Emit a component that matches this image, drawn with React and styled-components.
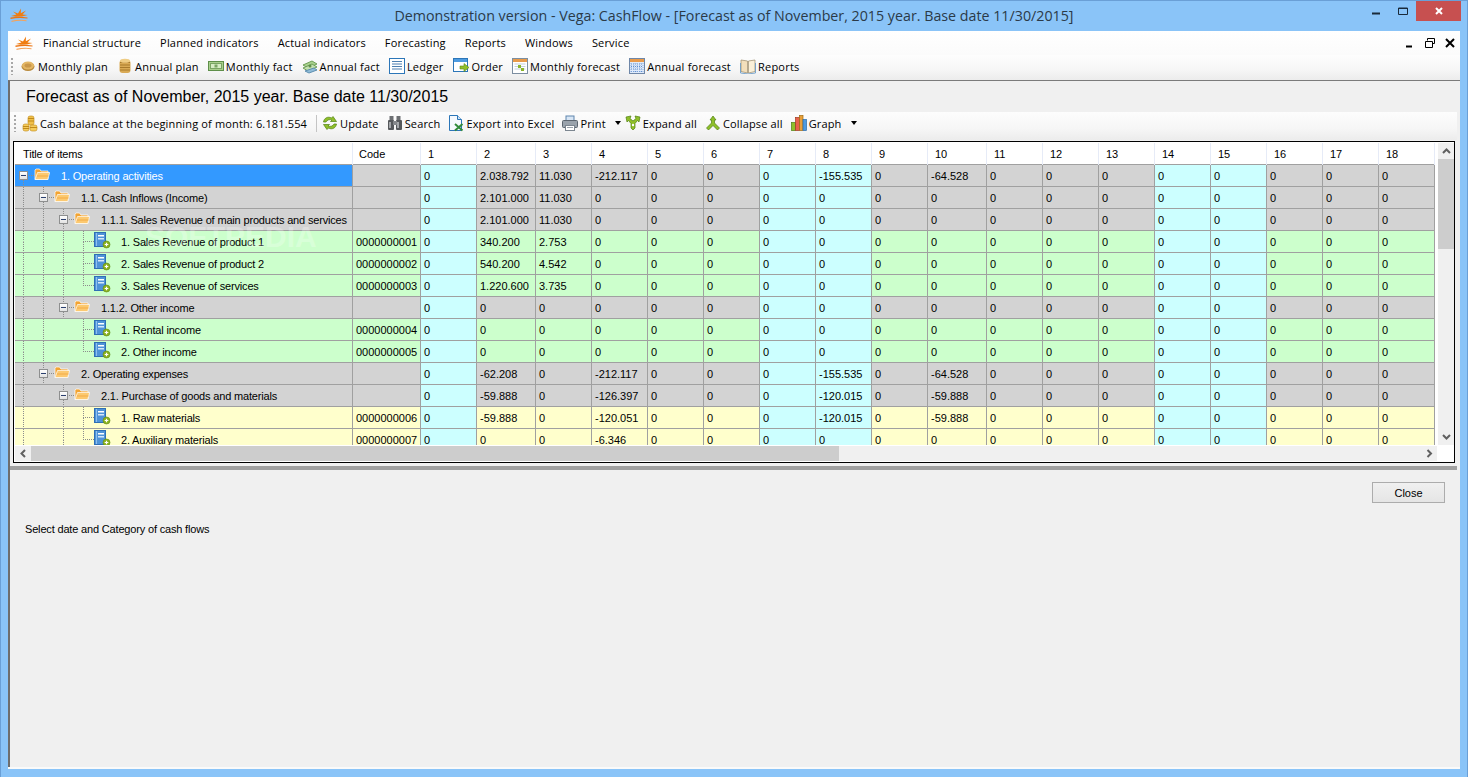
import React from "react";
import styled, { createGlobalStyle, css } from "styled-components";

const GlobalStyle = createGlobalStyle`
  html, body {
    margin: 0;
    padding: 0;
    background: #8ac4f8;
  }
  * {
    box-sizing: border-box;
  }
`;

const uiFont = `"Open Sans", "Noto Sans", sans-serif`;
const gridFont = `"Liberation Sans", Arial, sans-serif`;

const Window = styled.div`
  width: 1468px;
  height: 777px;
  display: flex;
  flex-direction: column;
  overflow: hidden;
  background: #8ac4f8;
  border: 1px solid #6a9fd6;
  border-bottom: 0;
`;

const TitleBar = styled.div`
  height: 30px;
  flex-shrink: 0;
  display: grid;
  grid-template-columns: 1fr auto 1fr;
  align-items: start;
`;

const AppMark = styled.div`
  padding: 7px 0 0 9px;
  line-height: 0;
`;

const WindowTitle = styled.div`
  font-family: ${uiFont};
  font-size: 14.25px;
  line-height: 30px;
  color: #2b3a48;
`;

const Controls = styled.div`
  display: flex;
  justify-content: flex-end;
  padding-right: 6px;
`;

const WinButton = styled.div`
  width: ${({ $w }) => $w}px;
  height: 20px;
  display: flex;
  align-items: center;
  justify-content: center;
  background: ${({ $close }) => ($close ? "#c75050" : "transparent")};
`;

const Client = styled.div`
  flex: 1;
  min-height: 0;
  margin: 0 7px 8px;
  display: flex;
  flex-direction: column;
  background: #f0f0f0;
  border-bottom: 2px solid #fafafa;
`;

const MenuBar = styled.div`
  height: 24px;
  flex-shrink: 0;
  display: flex;
  align-items: center;
  padding-left: 7px;
  background: linear-gradient(#ffffff, #fbfbfb);
`;

const MenuMark = styled.div`
  width: 28px;
  line-height: 0;
`;

const MenuItems = styled.div`
  display: flex;
  gap: 19px;
  flex: 1;
  padding-bottom: 2px;
`;

const MenuItem = styled.span`
  font-family: ${uiFont};
  font-size: 11px;
  letter-spacing: 0.17px;
  color: #000;
  white-space: nowrap;
`;

const MdiButtons = styled.div`
  display: flex;
  align-items: center;
  gap: 8px;
  padding-right: 4px;
`;

const ToolBar = styled.div`
  height: ${({ $h }) => $h}px;
  flex-shrink: 0;
  display: flex;
  align-items: center;
  gap: ${({ $gap }) => $gap}px;
  padding: 0 0 ${({ $lift }) => $lift}px ${({ $pad }) => $pad}px;
  background: linear-gradient(#fdfdfd, #f6f6f6 60%, #ececec);
`;

const Grip = styled.div`
  width: 2px;
  height: 17px;
  margin-right: -2px;
  background: repeating-linear-gradient(to bottom, #a8a8a8 0 2px, transparent 2px 4px);
`;

const ToolItem = styled.div`
  display: flex;
  align-items: center;
  gap: 2px;
  font-family: ${uiFont};
  font-size: 11px;
  letter-spacing: ${({ $track }) => $track}px;
  color: #000;
  white-space: nowrap;
`;

const ToolSep = styled.div`
  width: 1px;
  height: 17px;
  margin: 0 -3px 0 1px;
  background: #c4c4c4;
`;

const DropArrow = styled.div`
  width: 0;
  height: 0;
  margin-left: 1px;
  margin-right: -4px;
  border-left: 3.5px solid transparent;
  border-right: 3.5px solid transparent;
  border-top: 4px solid #000;
`;

const Child = styled.div`
  flex: 1;
  min-height: 0;
  display: flex;
  flex-direction: column;
  border-top: 1px solid #7b7b7b;
  border-left: 2px solid #6e6e6e;
  padding-right: 3px;
  background: #f0f0f0;
`;

const ChildTitle = styled.div`
  height: 31px;
  flex-shrink: 0;
  padding-left: 16px;
  font-family: ${gridFont};
  font-size: 16px;
  line-height: 31px;
  color: #000;
`;

const GridBox = styled.div`
  height: 322px;
  flex-shrink: 0;
  margin: 1px 2px 0 3px;
  display: flex;
  flex-direction: column;
  border: 1px solid #000;
  padding: 1px 0 1px 1px;
  background: #fff;
`;

const GridTop = styled.div`
  height: 302px;
  flex-shrink: 0;
  display: flex;
`;

const GridPane = styled.div`
  position: relative;
  flex: 1;
  min-width: 0;
  overflow: hidden;
  background: #fff;
`;

const Watermark = styled.div`
  position: absolute;
  left: 130px;
  top: 77px;
  font-family: ${gridFont};
  font-size: 30px;
  font-weight: bold;
  color: rgba(255, 255, 255, 0.26);
  pointer-events: none;
`;

const columns = `338px 68px 56px 59px repeat(7, 56px) 59px repeat(8, 56px)`;

const HeaderRow = styled.div`
  display: grid;
  grid-template-columns: ${columns};
  height: 22px;
  width: 1420px;
  border-bottom: 1px solid #a0a0a0;
`;

const HeaderCell = styled.div`
  font-family: ${gridFont};
  font-size: 11px;
  letter-spacing: ${({ $tight }) => ($tight ? "-0.17px" : "0")};
  line-height: 23px;
  padding-left: ${({ $pad }) => $pad}px;
  border-right: 1px solid #e6ebf7;
  color: #000;
`;

const rowColors = { group: "#d3d3d3", income: "#ccffcc", expense: "#ffffcc" };

const Row = styled.div`
  display: grid;
  grid-template-columns: ${columns};
  height: 22px;
  width: 1420px;
  border-bottom: 1px solid #a0a0a0;
  background: ${({ $kind }) => rowColors[$kind]};
`;

const TreeCell = styled.div`
  display: flex;
  align-items: stretch;
  height: 21px;
  border-right: 1px solid #a0a0a0;
  background: ${({ $active }) => ($active ? "#3399ff" : "transparent")};
  color: ${({ $active }) => ($active ? "#fff" : "#000")};
`;

const dotsV = `repeating-linear-gradient(to bottom, #8c8c8c 0 1px, transparent 1px 2px)`;
const dotsH = `repeating-linear-gradient(to right, #8c8c8c 0 1px, transparent 1px 2px)`;

const Slot = styled.div`
  width: ${({ $w }) => $w || 20}px;
  flex-shrink: 0;
  display: flex;
  align-items: center;
  background-repeat: no-repeat;
  ${({ $up, $down, $h }) => {
    const layers = [];
    if ($up) layers.push(`${dotsV} 8px 0 / 1px 50% no-repeat`);
    if ($down) layers.push(`${dotsV} 8px 100% / 1px 50% no-repeat`);
    if ($h) layers.push(`${dotsH} 8px 50% / 100% 1px no-repeat`);
    return layers.length ? css`background: ${layers.join(", ")};` : "";
  }}
`;

const Toggler = styled.div`
  width: 9px;
  height: 9px;
  margin-left: 4px;
  display: flex;
  align-items: center;
  justify-content: center;
  border: 1px solid #8e8f8f;
  background: linear-gradient(#ffffff, #e2e2e2);
  &::after {
    content: "";
    width: 5px;
    height: 1px;
    background: #2a3f6e;
  }
`;

const NodeIcon = styled.div`
  width: 16px;
  height: 16px;
  flex-shrink: 0;
  align-self: center;
  margin-top: -3px;
  line-height: 0;
`;

const NodeLabel = styled.div`
  padding-left: 11px;
  font-family: ${gridFont};
  font-size: 11px;
  letter-spacing: -0.17px;
  line-height: 23px;
  white-space: nowrap;
`;

const Cell = styled.div`
  height: 21px;
  padding-left: ${({ $pad }) => $pad || 3}px;
  font-family: ${gridFont};
  font-size: 11px;
  line-height: 23px;
  color: #000;
  border-right: 1px solid #a0a0a0;
  white-space: nowrap;
  overflow: hidden;
  ${({ $weekend }) => $weekend && "background: #ccffff;"}
`;

const VBar = styled.div`
  width: 16px;
  flex-shrink: 0;
  display: flex;
  flex-direction: column;
  background: #f0f0f0;
`;

const ArrowBox = styled.div`
  width: 16px;
  height: 16px;
  flex-shrink: 0;
  display: flex;
  align-items: center;
  justify-content: center;
  line-height: 0;
`;

const VThumb = styled.div`
  height: ${({ $size }) => $size}px;
  flex-shrink: 0;
  background: #cdcdcd;
`;

const Spring = styled.div`
  flex: 1;
`;

const HBar = styled.div`
  height: 15px;
  flex-shrink: 0;
  margin-top: 1px;
  margin-right: 17px;
  display: flex;
  align-items: center;
  background: #f0f0f0;
`;

const HThumb = styled.div`
  width: ${({ $size }) => $size}px;
  height: 15px;
  flex-shrink: 0;
  background: #cdcdcd;
`;

const Splitter = styled.div`
  height: 4px;
  flex-shrink: 0;
  margin-top: 3px;
  background: #a0a0a0;
`;

const BottomPane = styled.div`
  flex: 1;
  display: flex;
  flex-direction: column;
  padding: 12px 12px 0 15px;
`;

const CloseButton = styled.button`
  align-self: flex-end;
  width: 73px;
  height: 21px;
  padding: 0;
  font-family: ${gridFont};
  font-size: 11px;
  color: #000;
  border: 1px solid #acacac;
  background: linear-gradient(#f0f0f0, #e5e5e5);
`;

const StatusText = styled.div`
  margin-top: 20px;
  font-family: ${gridFont};
  font-size: 11px;
  letter-spacing: -0.17px;
  line-height: 13px;
  color: #000;
`;

// --- drawings ---

const Sun = () => (
  <svg width="18" height="14" viewBox="0 0 18 14">
    <path d="M1 8 L6.500 6.400 L3 3.500 L8 5.600 L11 0.500 L10.800 5.200 L16 2.500 L12.500 6.400 L17.500 7 L12 8.400 L6 8.800 Z" fill="#f07c10" />
    <path d="M0.500 9.500 Q9 7.800 17.500 9.500 L17.500 10.600 Q9 9.200 0.500 11 Z" fill="#ec7412" />
    <path d="M1.500 12.800 Q9 11 16.500 12.300 L16.500 13.200 Q9 12.200 1.500 14 Z" fill="#f4a25a" />
  </svg>
);

const Folder = () => (
  <svg width="16" height="16" viewBox="0 0 16 16">
    <path d="M1 4 L1 13.500 L14 13.500 L14 5 L7 5 L5.500 3 L2 3 Z" fill="#f2a433" stroke="#fff" strokeWidth=".7" />
    <path d="M1 13.500 L3.500 6.500 L15.700 6.500 L13.700 13.500 Z" fill="#fcc970" stroke="#fff" strokeWidth=".7" />
    <path d="M3 10 L14.500 10" stroke="#f3ab45" />
  </svg>
);

const Book = () => (
  <svg width="17" height="17" viewBox="0 0 17 17">
    <rect x="0.500" y="0.500" width="11" height="14" fill="#4f93d8" stroke="#2f6fb5" />
    <rect x="2" y="1" width="1" height="13" fill="#8fc0ee" />
    <rect x="4" y="3" width="6" height="1.500" fill="#fff" />
    <rect x="4" y="6" width="6" height="1.500" fill="#d5e8fa" />
    <circle cx="12.500" cy="12.500" r="3.500" fill="#8cb21e" stroke="#5f8a10" strokeWidth=".6" />
    <path d="M10.700 12.500 H14.300 M12.500 10.700 V14.300" stroke="#fff" strokeWidth="1.200" />
  </svg>
);

const Coin = () => (
  <svg width="16" height="16" viewBox="0 0 16 16">
    <ellipse cx="8" cy="8.500" rx="6.500" ry="4.500" fill="#b98a3c" />
    <ellipse cx="8" cy="7.500" rx="6" ry="4" fill="#e3b664" />
    <ellipse cx="8" cy="7.500" rx="3.500" ry="2" fill="#c9974a" />
  </svg>
);

const CoinStack = () => (
  <svg width="16" height="17" viewBox="0 0 16 17">
    <rect x="2.500" y="2" width="11" height="13" rx="3" fill="#d9aa55" />
    <path d="M3 4.500 H13 M3 7 H13 M3 9.500 H13 M3 12 H13" stroke="#a87a2c" />
    <ellipse cx="8" cy="2.800" rx="5" ry="2" fill="#efcd85" />
  </svg>
);

const Banknote = () => (
  <svg width="16" height="16" viewBox="0 0 16 16">
    <rect x="0.500" y="3.500" width="15" height="9" fill="#a8cf8c" stroke="#5f8f4a" />
    <rect x="2.500" y="5.500" width="11" height="5" fill="#d6ecc4" stroke="#7aa564" />
    <rect x="6.500" y="6.500" width="3" height="3" fill="#7aa564" />
  </svg>
);

const MoneyPile = () => (
  <svg width="16" height="16" viewBox="0 0 16 16">
    <path d="M1 7 L10 3 L15 6 L6 10 Z" fill="#a9d18e" stroke="#6f9f58" />
    <path d="M1 10 L10 6 L15 9 L6 13 Z" fill="#c4e0b0" stroke="#6f9f58" />
    <circle cx="8" cy="8" r="1.500" fill="#5f8f4a" />
    <path d="M3 13 L12 10 L15 12 L7 15 Z" fill="#90bcd8" stroke="#5f8fb0" />
  </svg>
);

const Ledger = () => (
  <svg width="16" height="16" viewBox="0 0 16 16">
    <rect x="0.500" y="0.500" width="15" height="15" fill="#fff" stroke="#2c76b8" />
    <path d="M3 3.500 H13 M3 6 H13 M3 8.500 H13 M3 11 H13" stroke="#4e7fb0" />
  </svg>
);

const OrderIcon = () => (
  <svg width="17" height="16" viewBox="0 0 17 16">
    <rect x="0.500" y="0.500" width="14" height="13" fill="#fff" stroke="#2c76b8" />
    <rect x="1" y="1" width="13" height="3" fill="#4d9be0" />
    <path d="M7 8 H11 V5.500 L16 9.500 L11 13.500 V11 H7 Z" fill="#8fbf2a" stroke="#5f8a10" strokeWidth=".6" />
  </svg>
);

const CalendarMonth = () => (
  <svg width="16" height="16" viewBox="0 0 16 16">
    <rect x="0.500" y="0.500" width="15" height="15" fill="#fff" stroke="#7c8ea0" />
    <rect x="1" y="1" width="14" height="3" fill="#e89a4a" />
    <path d="M2.500 6 H13.500 M2.500 8.500 H13.500 M2.500 11 H13.500" stroke="#c4cfdc" />
    <rect x="6" y="7" width="3" height="3" fill="#8ab52a" />
    <rect x="9" y="10" width="3" height="3" fill="#8ab52a" />
  </svg>
);

const CalendarYear = () => (
  <svg width="16" height="16" viewBox="0 0 16 16">
    <rect x="0.500" y="0.500" width="15" height="15" fill="#dfeafa" stroke="#6f87a8" />
    <rect x="1" y="1" width="14" height="3" fill="#e89a4a" />
    <path d="M2 6 H14 M2 8.500 H14 M2 11 H14 M2 13.500 H14" stroke="#5f8fd0" strokeDasharray="1 1" />
    <path d="M2 5 V15 M5 5 V15 M8 5 V15 M11 5 V15 M14 5 V15" stroke="#8fb0e0" strokeDasharray="1 1" />
  </svg>
);

const OpenBook = () => (
  <svg width="16" height="16" viewBox="0 0 16 16">
    <path d="M1 2 L7.500 3 V15 L1 13.500 Z" fill="#f3dfbb" stroke="#9a8a6a" strokeWidth=".7" />
    <path d="M15 2 L8.500 3 V15 L15 13.500 Z" fill="#fbf0d8" stroke="#9a8a6a" strokeWidth=".7" />
    <path d="M0.500 5 V15 L8 16 L15.500 15 V5" fill="none" stroke="#5f94c4" strokeWidth=".8" />
  </svg>
);

const Coins = () => (
  <svg width="16" height="17" viewBox="0 0 16 17">
    <rect x="6" y="1" width="6" height="9" rx="2" fill="#f0c04a" stroke="#c08a1a" strokeWidth=".6" />
    <path d="M6 3.500 H12 M6 6 H12" stroke="#c08a1a" />
    <rect x="1" y="9" width="6" height="7" rx="2" fill="#f5cc5c" stroke="#c08a1a" strokeWidth=".6" />
    <path d="M1 11.500 H7 M1 13.500 H7" stroke="#c08a1a" />
    <rect x="8" y="10" width="7" height="6" rx="2" fill="#f5cc5c" stroke="#c08a1a" strokeWidth=".6" />
    <path d="M8 12.500 H15" stroke="#c08a1a" />
  </svg>
);

const Refresh = () => (
  <svg width="16" height="16" viewBox="0 0 16 16">
    <path d="M1.500 7 C2 3 6 1 9.500 3 L11 1.500 L14.500 6.500 L8.500 6.500 L10 5 C7.500 4 5 5 4 7 Z" fill="#8fbf2a" stroke="#4f7f10" strokeWidth=".7" />
    <path d="M14.500 9 C14 13 10 15 6.500 13 L5 14.500 L1.500 9.500 L7.500 9.500 L6 11 C8.500 12 11 11 12 9 Z" fill="#8fbf2a" stroke="#4f7f10" strokeWidth=".7" />
  </svg>
);

const Binoculars = () => (
  <svg width="16" height="16" viewBox="0 0 16 16">
    <rect x="2.500" y="1" width="4" height="5" fill="#6c6f72" />
    <rect x="9.500" y="1" width="4" height="5" fill="#6c6f72" />
    <rect x="1" y="5" width="6" height="10" rx="1" fill="#55585b" />
    <rect x="9" y="5" width="6" height="10" rx="1" fill="#55585b" />
    <rect x="6" y="6" width="4" height="4" fill="#85888b" />
    <rect x="2" y="7" width="2" height="6" fill="#a4a7aa" />
    <rect x="10" y="7" width="2" height="6" fill="#a4a7aa" />
  </svg>
);

const ExcelDoc = () => (
  <svg width="16" height="17" viewBox="0 0 16 17">
    <path d="M1.500 0.500 H9.500 L13.500 4.500 V15.500 H1.500 Z" fill="#f4f9fe" stroke="#2c76b8" />
    <path d="M9.500 0.500 V4.500 H13.500" fill="#cfe3f7" stroke="#2c76b8" />
    <path d="M7 9 L14.500 15.500 M14.500 9 L7 15.500" stroke="#2f8a3a" strokeWidth="2" />
  </svg>
);

const Printer = () => (
  <svg width="16" height="16" viewBox="0 0 16 16">
    <rect x="4" y="1" width="8" height="5" fill="#d8e6f5" stroke="#5f85ad" />
    <rect x="0.500" y="5.500" width="15" height="7" rx="1" fill="#9aa3ac" stroke="#5c6670" />
    <rect x="3.500" y="10.500" width="9" height="5" fill="#fff" stroke="#7c8690" />
    <path d="M5 12.500 H11" stroke="#9aa3ac" />
  </svg>
);

const ExpandAll = () => (
  <svg width="16" height="16" viewBox="0 0 16 16">
    <path d="M1 2 L6 1 L5 3.500 L8 6 L11 3.500 L10 1 L15 2 L14 7 L12.500 5.500 L10 8.500 L10 13 L8 15 L6 13 L6 8.500 L3.500 5.500 L2 7 Z" fill="#8fbf2a" stroke="#4f7f10" strokeWidth=".7" />
    <circle cx="8" cy="10" r="1.200" fill="#fff" />
  </svg>
);

const CollapseAll = () => (
  <svg width="16" height="16" viewBox="0 0 16 16">
    <path d="M8 1 L11 5 L9.500 5 L9.500 8 L14.500 13 L12.500 15 L8 10.500 L3.500 15 L1.500 13 L6.500 8 L6.500 5 L5 5 Z" fill="#8fbf2a" stroke="#4f7f10" strokeWidth=".7" />
  </svg>
);

const BarGraph = () => (
  <svg width="16" height="16" viewBox="0 0 16 16">
    <rect x="0.500" y="7.500" width="4" height="8" fill="#8fbf2a" stroke="#4f7f10" strokeWidth=".7" />
    <rect x="4.500" y="2.500" width="4" height="13" fill="#e8624a" stroke="#a03a20" strokeWidth=".7" />
    <rect x="8.500" y="0.500" width="3.500" height="15" fill="#e8a03a" stroke="#a06a10" strokeWidth=".7" />
    <rect x="12" y="4.500" width="3.500" height="11" fill="#4d9be0" stroke="#2c6aa8" strokeWidth=".7" />
  </svg>
);

const Chevron = ({ dir }) => {
  const paths = {
    up: "M1 6 L4.500 2.500 L8 6",
    down: "M1 2 L4.500 5.500 L8 2",
    left: "M6 1 L2.500 4.500 L6 8",
    right: "M2.500 1 L6 4.500 L2.500 8",
  };
  return (
    <svg width="9" height="9" viewBox="0 0 9 9">
      <path d={paths[dir]} fill="none" stroke="#606060" strokeWidth="2" />
    </svg>
  );
};

const Glyph = ({ d, w = 12, h = 12, stroke = "#000", sw = 1 }) => (
  <svg width={w} height={h} viewBox={`0 0 ${w} ${h}`}>
    <path d={d} fill="none" stroke={stroke} strokeWidth={sw} />
  </svg>
);

// --- data ---

const menus = [
  "Financial structure",
  "Planned indicators",
  "Actual indicators",
  "Forecasting",
  "Reports",
  "Windows",
  "Service",
];

const mainTools = [
  [Coin, "Monthly plan"],
  [CoinStack, "Annual plan"],
  [Banknote, "Monthly fact"],
  [MoneyPile, "Annual fact"],
  [Ledger, "Ledger"],
  [OrderIcon, "Order"],
  [CalendarMonth, "Monthly forecast"],
  [CalendarYear, "Annual forecast"],
  [OpenBook, "Reports"],
];

const childTools = [
  [Refresh, "Update"],
  [Binoculars, "Search"],
  [ExcelDoc, "Export into Excel"],
  [Printer, "Print", true],
  [ExpandAll, "Expand all"],
  [CollapseAll, "Collapse all"],
  [BarGraph, "Graph", true],
];

const weekends = [1, 7, 8, 14, 15];
const days = Array.from({ length: 18 }, (_, i) => i + 1);

const vals = (set = {}) => days.map((d) => set[d] || "0");

const rows = [
  { label: "1. Operating activities", kind: "group", guides: [], up: false, active: true,
    values: vals({ 2: "2.038.792", 3: "11.030", 4: "-212.117", 8: "-155.535", 10: "-64.528" }) },
  { label: "1.1. Cash Inflows (Income)", kind: "group", guides: [1], up: true,
    values: vals({ 2: "2.101.000", 3: "11.030" }) },
  { label: "1.1.1. Sales Revenue of main products and services", kind: "group", guides: [1, 1], up: true,
    values: vals({ 2: "2.101.000", 3: "11.030" }) },
  { label: "1. Sales Revenue of product 1", kind: "income", leaf: true, guides: [1, 1, 1], code: "0000000001",
    values: vals({ 2: "340.200", 3: "2.753" }) },
  { label: "2. Sales Revenue of product 2", kind: "income", leaf: true, guides: [1, 1, 1], code: "0000000002",
    values: vals({ 2: "540.200", 3: "4.542" }) },
  { label: "3. Sales Revenue of services", kind: "income", leaf: true, last: true, guides: [1, 1, 1], code: "0000000003",
    values: vals({ 2: "1.220.600", 3: "3.735" }) },
  { label: "1.1.2. Other income", kind: "group", guides: [1, 1], up: true, values: vals() },
  { label: "1. Rental income", kind: "income", leaf: true, guides: [1, 1, 0], code: "0000000004", values: vals() },
  { label: "2. Other income", kind: "income", leaf: true, last: true, guides: [1, 1, 0], code: "0000000005", values: vals() },
  { label: "2. Operating expenses", kind: "group", guides: [1], up: true,
    values: vals({ 2: "-62.208", 4: "-212.117", 8: "-155.535", 10: "-64.528" }) },
  { label: "2.1. Purchase of goods and materials", kind: "group", guides: [1, 0], up: true,
    values: vals({ 2: "-59.888", 4: "-126.397", 8: "-120.015", 10: "-59.888" }) },
  { label: "1. Raw materials", kind: "expense", leaf: true, guides: [1, 0, 1], code: "0000000006",
    values: vals({ 2: "-59.888", 4: "-120.051", 8: "-120.015", 10: "-59.888" }) },
  { label: "2. Auxiliary materials", kind: "expense", leaf: true, last: true, guides: [1, 0, 1], code: "0000000007",
    values: vals({ 4: "-6.346" }) },
];

const TreeRow = ({ row }) => (
  <Row $kind={row.kind}>
    <TreeCell $active={row.active}>
      {row.guides.map((on, i) => (
        <Slot key={i} $up={on} $down={on} />
      ))}
      {row.leaf ? (
        <Slot $w={19} $up $down={!row.last} $h />
      ) : (
        <Slot $w={19} $up={row.up} $down $h>
          <Toggler />
        </Slot>
      )}
      <NodeIcon>{row.leaf ? <Book /> : <Folder />}</NodeIcon>
      <NodeLabel>{row.label}</NodeLabel>
    </TreeCell>
    <Cell>{row.code}</Cell>
    {row.values.map((v, i) => (
      <Cell key={i} $weekend={weekends.includes(i + 1)}>
        {v}
      </Cell>
    ))}
  </Row>
);

export default function App() {
  return (
    <>
      <GlobalStyle />
      <Window>
        <TitleBar>
          <AppMark>
            <Sun />
          </AppMark>
          <WindowTitle>
            Demonstration version - Vega: CashFlow - [Forecast as of November, 2015 year. Base date 11/30/2015]
          </WindowTitle>
          <Controls>
            <WinButton $w={26}>
              <Glyph d="M1 8.500 H9" sw={2} stroke="#1a2a3a" />
            </WinButton>
            <WinButton $w={26}>
              <Glyph d="M1.500 3 H10.500 V9.500 H1.500 Z M1.500 3.500 H10.500" stroke="#1a2a3a" />
            </WinButton>
            <WinButton $w={45} $close>
              <Glyph d="M3 3 L9 9 M9 3 L3 9" stroke="#fff" sw={2} />
            </WinButton>
          </Controls>
        </TitleBar>
        <Client>
          <MenuBar>
            <MenuMark>
              <Sun />
            </MenuMark>
            <MenuItems>
              {menus.map((m) => (
                <MenuItem key={m}>{m}</MenuItem>
              ))}
            </MenuItems>
            <MdiButtons>
              <Glyph d="M4 9.500 H10" w={14} sw={2} />
              <Glyph d="M3.500 3.500 V1.500 H10.500 V6.500 H8.500 M1.500 4.500 H8.500 V10.500 H1.500 Z" />
              <Glyph d="M2 2 L10 10 M10 2 L2 10" sw={2} />
            </MdiButtons>
          </MenuBar>
          <ToolBar $h={25} $lift={3} $gap={9} $pad={3}>
            <Grip />
            {mainTools.map(([Icon, label]) => (
              <ToolItem key={label} $track={0.22}>
                <Icon />
                {label}
              </ToolItem>
            ))}
          </ToolBar>
          <Child>
            <ChildTitle>Forecast as of November, 2015 year. Base date 11/30/2015</ChildTitle>
            <ToolBar $h={28} $lift={6} $gap={8} $pad={4}>
              <Grip />
              <ToolItem $track={0.15}>
                <Coins />
                Cash balance at the beginning of month: 6.181.554
              </ToolItem>
              <ToolSep />
              {childTools.map(([Icon, label, drop]) => (
                <React.Fragment key={label}>
                  <ToolItem $track={0.15}>
                    <Icon />
                    {label}
                  </ToolItem>
                  {drop && <DropArrow />}
                </React.Fragment>
              ))}
            </ToolBar>
            <GridBox>
              <GridTop>
                <GridPane>
                  <HeaderRow>
                    <HeaderCell $pad={8} $tight>Title of items</HeaderCell>
                    <HeaderCell $pad={6}>Code</HeaderCell>
                    {days.map((d) => (
                      <HeaderCell key={d} $pad={7}>
                        {d}
                      </HeaderCell>
                    ))}
                  </HeaderRow>
                  {rows.map((row) => (
                    <TreeRow key={row.label + row.kind + row.code} row={row} />
                  ))}
                  <Watermark>SOFTPEDIA</Watermark>
                </GridPane>
                <VBar>
                  <ArrowBox>
                    <Chevron dir="up" />
                  </ArrowBox>
                  <VThumb $size={90} />
                  <Spring />
                  <ArrowBox>
                    <Chevron dir="down" />
                  </ArrowBox>
                </VBar>
              </GridTop>
              <HBar>
                <ArrowBox>
                  <Chevron dir="left" />
                </ArrowBox>
                <HThumb $size={808} />
                <Spring />
                <ArrowBox>
                  <Chevron dir="right" />
                </ArrowBox>
              </HBar>
            </GridBox>
            <Splitter />
            <BottomPane>
              <CloseButton>Close</CloseButton>
              <StatusText>Select date and Category of cash flows</StatusText>
            </BottomPane>
          </Child>
        </Client>
      </Window>
    </>
  );
}
